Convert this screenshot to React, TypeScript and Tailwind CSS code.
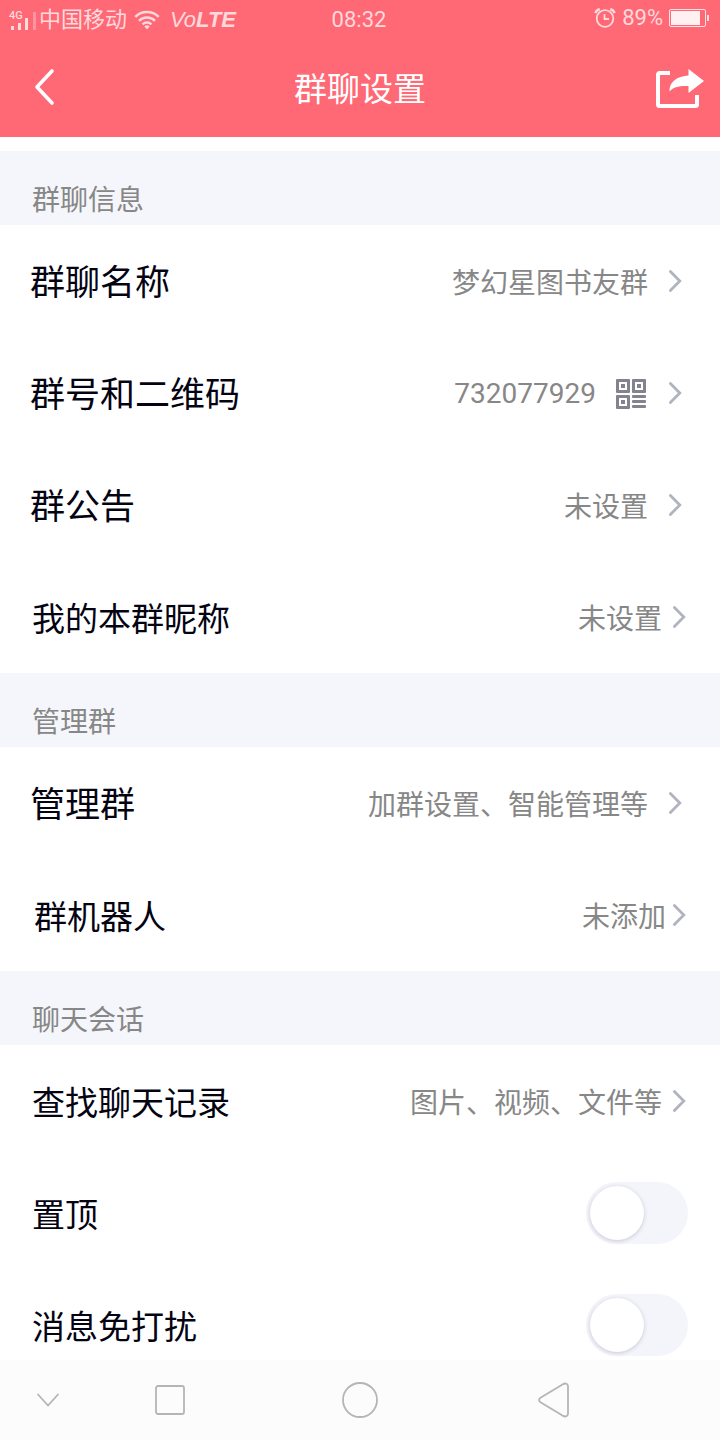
import { useState } from "react";
import type { ReactNode } from "react";
import { clsx } from "clsx";

interface SettingItem {
  label: string;
  value?: string;
  qrCode?: boolean;
  layout?: "regular" | "compact" | "snug";
  toggle?: boolean;
}

interface SettingSection {
  title: string;
  items: SettingItem[];
}

const SECTIONS: SettingSection[] = [
  {
    title: "群聊信息",
    items: [
      { label: "群聊名称", value: "梦幻星图书友群" },
      { label: "群号和二维码", value: "732077929", qrCode: true },
      { label: "群公告", value: "未设置" },
      { label: "我的本群昵称", value: "未设置", layout: "compact" },
    ],
  },
  {
    title: "管理群",
    items: [
      { label: "管理群", value: "加群设置、智能管理等" },
      { label: "群机器人", value: "未添加", layout: "snug" },
    ],
  },
  {
    title: "聊天会话",
    items: [
      { label: "查找聊天记录", value: "图片、视频、文件等", layout: "compact" },
      { label: "置顶", toggle: true },
      { label: "消息免打扰", toggle: true },
    ],
  },
];

const rowStyles = {
  regular: "gap-5 pr-[38px] pl-[30px] text-[35px]",
  compact: "gap-2.5 pr-[34px] pl-8 text-[33px]",
  snug: "gap-1.5 pr-[34px] pl-[34px] text-[33px]",
} as const;

function SignalIcon() {
  return (
    <svg width="28" height="22" viewBox="0 0 28 22" fill="currentColor" aria-hidden="true">
      <text x="0" y="10" fontSize="11" fontWeight="500" fontFamily="Roboto, sans-serif">
        4G
      </text>
      <rect x="2" y="17" width="3" height="4" />
      <rect x="9" y="14" width="3" height="7" />
      <rect x="16" y="9" width="3" height="12" />
      <rect x="24" y="3" width="3" height="18" opacity="0.4" />
    </svg>
  );
}

function WifiIcon() {
  return (
    <svg
      width="26"
      height="20"
      viewBox="0 0 26 20"
      fill="none"
      stroke="currentColor"
      strokeWidth="2.4"
      aria-hidden="true"
    >
      <path d="M1.3 6.8a16.6 16.6 0 0 1 23.4 0" />
      <path d="M5 10.8a11.3 11.3 0 0 1 16 0" />
      <path d="M8.6 14.4a6.2 6.2 0 0 1 8.8 0" />
      <path d="M13 19.4l-2.7-2.9a3.9 3.9 0 0 1 5.4 0z" fill="currentColor" stroke="none" />
    </svg>
  );
}

function AlarmIcon() {
  return (
    <svg
      width="22"
      height="20"
      viewBox="0 0 22 20"
      fill="none"
      stroke="currentColor"
      strokeWidth="1.8"
      aria-hidden="true"
    >
      <circle cx="11" cy="10.5" r="8.3" />
      <path d="M10.5 6v5h4.5" />
      <path d="M1.4 5.2C2 3.2 3.6 1.7 5.8 1.3M20.6 5.2C20 3.2 18.4 1.7 16.2 1.3" strokeWidth="2.4" />
    </svg>
  );
}

function BatteryIcon() {
  return (
    <svg width="40" height="18" viewBox="0 0 40 18" aria-hidden="true">
      <rect
        x="0.5"
        y="0.5"
        width="36"
        height="17"
        rx="1.5"
        fill="none"
        stroke="white"
        strokeOpacity="0.8"
      />
      <rect x="2" y="2" width="29" height="14" fill="white" fillOpacity="0.9" />
      <rect x="38" y="6" width="2" height="6" fill="white" fillOpacity="0.8" />
    </svg>
  );
}

function ShareIcon() {
  return (
    <svg width="50" height="40" viewBox="0 0 50 40" aria-hidden="true">
      <path
        d="M15 4H4.500a1.500 1.500 0 0 0-1.500 1.500V35.500a1.500 1.500 0 0 0 1.500 1.500H40.500a1.500 1.500 0 0 0 1.500-1.500V26"
        fill="none"
        stroke="white"
        strokeWidth="4"
      />
      <path d="M33.500 0L49 12L33.500 24V17C25 16.500 18 18 14.500 22.500C14 13 22 7 33.500 6.500Z" fill="white" />
    </svg>
  );
}

function QrIcon() {
  return (
    <svg width="30" height="30" viewBox="0 0 30 30" fill="#82838f" aria-hidden="true">
      <path
        fillRule="evenodd"
        d="M1 0h12a1 1 0 0 1 1 1v12a1 1 0 0 1-1 1H1a1 1 0 0 1-1-1V1a1 1 0 0 1 1-1zM3 3v8h8V3zM17 0h12a1 1 0 0 1 1 1v12a1 1 0 0 1-1 1H17a1 1 0 0 1-1-1V1a1 1 0 0 1 1-1zM19 3v8h8V3zM1 16h12a1 1 0 0 1 1 1v12a1 1 0 0 1-1 1H1a1 1 0 0 1-1-1V17a1 1 0 0 1 1-1zM3 19v8h8v-8z"
      />
      <path d="M5 5h4v4H5zM21 5h4v4h-4zM5 21h4v4H5z" />
      <rect x="16" y="16" width="14" height="3" rx="1" />
      <rect x="16" y="21" width="14" height="3" rx="1" />
      <rect x="16" y="26" width="14" height="3" rx="1" />
    </svg>
  );
}

function ChevronIcon() {
  return (
    <svg
      width="14"
      height="24"
      viewBox="0 0 14 24"
      fill="none"
      stroke="#b2b3c1"
      strokeWidth="2.8"
      strokeLinecap="round"
      aria-hidden="true"
    >
      <path d="M2.400 2.400L11.800 12L2.400 21.600" />
    </svg>
  );
}

function StatusBar() {
  return (
    <div className="grid h-10 grid-cols-[1fr_auto_1fr] items-center pr-[11px] pl-[9px] text-[22px] leading-6 text-white/75">
      <div className="flex items-center">
        <SignalIcon />
        <span className="ml-0.5">中国移动</span>
        <span className="ml-[7px]">
          <WifiIcon />
        </span>
        <span className="ml-2.5 font-['Liberation_Sans',sans-serif] italic">
          Vo<b>LTE</b>
        </span>
      </div>
      <time>08:32</time>
      <div className="flex items-center justify-end gap-1.5 pb-1">
        <AlarmIcon />
        <span>89%</span>
        <BatteryIcon />
      </div>
    </div>
  );
}

function TitleBar() {
  return (
    <div className="grid h-[97px] grid-cols-[1fr_auto_1fr] items-center px-[15px] text-white">
      <button type="button" aria-label="返回" className="justify-self-start pb-1 pl-[18px]">
        <svg
          width="22"
          height="38"
          viewBox="0 0 22 38"
          fill="none"
          stroke="currentColor"
          strokeWidth="3.6"
          strokeLinecap="round"
          strokeLinejoin="round"
        >
          <path d="M19 3L4 19L19 35" />
        </svg>
      </button>
      <h1 className="pt-0.5 text-[33px] leading-10">群聊设置</h1>
      <button type="button" aria-label="分享" className="justify-self-end">
        <ShareIcon />
      </button>
    </div>
  );
}

function ToggleRow({ label }: { label: string }) {
  const [checked, setChecked] = useState(false);

  return (
    <label className="flex h-28 items-center justify-between px-8 text-[33px] text-[#030312]">
      <span className="pt-1.5">{label}</span>
      <input
        type="checkbox"
        role="switch"
        checked={checked}
        onChange={(e) => setChecked(e.target.checked)}
        className="flex h-[62px] w-[102px] appearance-none items-center rounded-full bg-[#f4f5fa] p-1 before:size-[54px] before:rounded-full before:bg-white before:shadow-[0_1px_4px_#c4c6d8] checked:justify-end checked:bg-[#ff6875]"
      />
    </label>
  );
}

function LinkRow({ label, value, qrCode, layout = "regular" }: SettingItem) {
  return (
    <button
      type="button"
      className={clsx(
        "flex h-28 w-full items-center text-left text-[#030312]",
        rowStyles[layout],
      )}
    >
      <span className="flex-1 pt-1.5">{label}</span>
      <span className={clsx("text-[28px] text-[#878787]", qrCode ? "pt-0.5" : "pt-1.5")}>
        {value}
      </span>
      {qrCode && (
        <span className="pt-0.5 pr-0.5">
          <QrIcon />
        </span>
      )}
      <ChevronIcon />
    </button>
  );
}

function NavButton({ label, children }: { label: string; children: ReactNode }) {
  return (
    <button type="button" aria-label={label}>
      <svg
        width="40"
        height="40"
        viewBox="0 0 40 40"
        fill="none"
        stroke="#b5b5b5"
        strokeWidth="1.8"
        strokeLinecap="round"
        strokeLinejoin="round"
      >
        {children}
      </svg>
    </button>
  );
}

function SystemNav() {
  return (
    <nav className="grid h-20 shrink-0 grid-cols-[96fr_148fr_232fr_156fr_88fr] items-center justify-items-center bg-[#fcfcfc]">
      <NavButton label="收起">
        <path d="M10 14.500L20 25.500L30 14.500" />
      </NavButton>
      <NavButton label="最近任务">
        <rect x="6" y="6" width="28" height="28" rx="2" />
      </NavButton>
      <NavButton label="主屏幕">
        <circle cx="20" cy="20" r="17" />
      </NavButton>
      <NavButton label="后退">
        <path d="M6.500 17.800L28.500 4.400Q33 2 34 6V34Q33 38 28.500 35.600L6.500 22.200Q3.500 20 6.500 17.800Z" />
      </NavButton>
    </nav>
  );
}

export default function App() {
  return (
    <div className="flex h-screen flex-col bg-white font-[Roboto,'Noto_Sans_CJK_SC',sans-serif]">
      <header className="shrink-0 bg-[#ff6875]">
        <StatusBar />
        <TitleBar />
      </header>

      <main className="min-h-0 flex-1 overflow-y-auto pt-3.5 [scrollbar-width:none]">
        {SECTIONS.map((section) => (
          <section key={section.title}>
            <h2 className="flex h-[74px] items-end bg-[#f5f6fb] px-8 pb-1 text-[28px] leading-10 text-[#878787]">
              {section.title}
            </h2>
            {section.items.map((item) =>
              item.toggle ? (
                <ToggleRow key={item.label} label={item.label} />
              ) : (
                <LinkRow key={item.label} {...item} />
              ),
            )}
          </section>
        ))}
      </main>

      <SystemNav />
    </div>
  );
}
